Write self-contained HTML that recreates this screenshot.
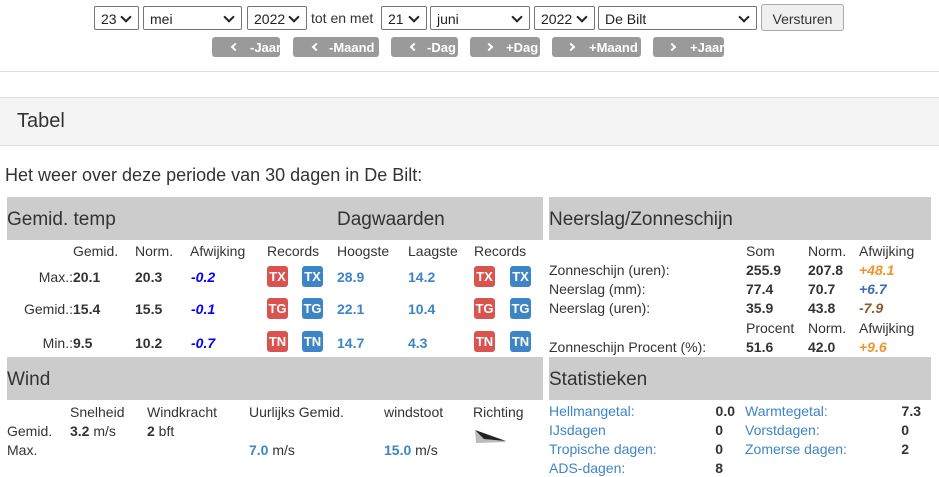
<!DOCTYPE html>
<html><head><meta charset="utf-8"><style>
*{margin:0;padding:0;box-sizing:border-box}
body{width:939px;height:477px;overflow:hidden;background:#fff;font-family:"Liberation Sans",sans-serif;font-size:14px;color:#333;position:relative}
.a{position:absolute;white-space:nowrap;line-height:1}
.sel{position:absolute;top:6px;height:24px;border:1px solid #767676;border-radius:2px;background:#fff;font-size:14px;padding:4px 0 0 6px;color:#222;white-space:nowrap}
.sel::after{content:"";position:absolute;right:8px;top:6px;width:6px;height:6px;border-right:2px solid #222;border-bottom:2px solid #222;transform:rotate(45deg)}
.btn{position:absolute;top:37px;height:20px;background:#9a9a9a;border-radius:3px;color:#fff;font-weight:bold;font-size:13px;white-space:nowrap}
.btn span{position:absolute;top:3px;white-space:nowrap}
.btn i{position:absolute;top:7px;width:6px;height:6px;border-left:2px solid #fff;border-bottom:2px solid #fff}
.hd{position:absolute;background:#ccc;height:43px;font-size:19px;padding:12px 0 0 0;color:#333}
.b{font-weight:bold}
.bd{position:absolute;width:21px;height:21px;border-radius:3px;color:#fff;font-weight:bold;font-size:13px;text-align:center;line-height:21px}
.r{background:#d9534f}.u{background:#3d85c6}
.bl{color:#3d85c6}
.ab{color:#00f;font-weight:bold;font-style:italic}
.or{color:#f0932b;font-weight:bold;font-style:italic}
</style></head><body>
<div class="sel" style="left:94px;width:45px">23</div>
<div class="sel" style="left:143px;width:99px">mei</div>
<div class="sel" style="left:247px;width:60px">2022</div>
<div class="a" style="left:311px;top:11px">tot en met</div>
<div class="sel" style="left:381px;width:46px">21</div>
<div class="sel" style="left:430px;width:100px">juni</div>
<div class="sel" style="left:534px;width:61px">2022</div>
<div class="sel" style="left:598px;width:159px">De Bilt</div>
<div style="position:absolute;left:761px;top:4px;width:83px;height:27px;border:1px solid #aaa;border-radius:3px;background:#efefef;font-size:14px;text-align:center;padding-top:6px">Versturen</div>

<div class="btn" style="left:212px;width:68px"><i style="left:20px;transform:rotate(45deg)"></i><span style="left:38px">-Jaar</span></div>
<div class="btn" style="left:293px;width:86px"><i style="left:20px;transform:rotate(45deg)"></i><span style="left:36px">-Maand</span></div>
<div class="btn" style="left:391px;width:67px"><i style="left:20px;transform:rotate(45deg)"></i><span style="left:36px">-Dag</span></div>
<div class="btn" style="left:470px;width:70px"><i style="left:16px;transform:rotate(-135deg)"></i><span style="left:36px">+Dag</span></div>
<div class="btn" style="left:552px;width:89px"><i style="left:16px;transform:rotate(-135deg)"></i><span style="left:37px">+Maand</span></div>
<div class="btn" style="left:653px;width:71px"><i style="left:16px;transform:rotate(-135deg)"></i><span style="left:37px">+Jaar</span></div>

<div style="position:absolute;left:0;top:71px;width:939px;height:1px;background:#ddd"></div>
<div style="position:absolute;left:0;top:97px;width:939px;height:49px;background:#f4f4f4;border-top:1px solid #ddd;border-bottom:1px solid #ddd"></div>
<div class="a" style="left:17px;top:111px;font-size:20px">Tabel</div>
<div class="a" style="left:5px;top:166px;font-size:18px">Het weer over deze periode van 30 dagen in De Bilt:</div>

<div class="hd" style="left:7px;top:197px;width:536px"><span>Gemid. temp</span><span style="position:absolute;left:330px">Dagwaarden</span></div>
<div class="hd" style="left:549px;top:197px;width:382px">Neerslag/Zonneschijn</div>

<div class="a" style="left:73px;top:244px">Gemid.</div>
<div class="a" style="left:135px;top:244px">Norm.</div>
<div class="a" style="left:190px;top:244px">Afwijking</div>
<div class="a" style="left:267px;top:244px">Records</div>
<div class="a" style="left:337px;top:244px">Hoogste</div>
<div class="a" style="left:408px;top:244px">Laagste</div>
<div class="a" style="left:474px;top:244px">Records</div>

<div class="a" style="right:866px;top:270px">Max.:</div><div class="a b" style="left:73px;top:270px">20.1</div>
<div class="a b" style="left:135px;top:270px">20.3</div><div class="a ab" style="left:191px;top:270px">-0.2</div>
<div class="a" style="right:866px;top:302px">Gemid.:</div><div class="a b" style="left:73px;top:302px">15.4</div>
<div class="a b" style="left:135px;top:302px">15.5</div><div class="a ab" style="left:191px;top:302px">-0.1</div>
<div class="a" style="right:866px;top:336px">Min.:</div><div class="a b" style="left:73px;top:336px">9.5</div>
<div class="a b" style="left:135px;top:336px">10.2</div><div class="a ab" style="left:191px;top:336px">-0.7</div>

<div class="bd r" style="left:267px;top:266px">TX</div><div class="bd u" style="left:302px;top:266px">TX</div>
<div class="bd r" style="left:267px;top:298px">TG</div><div class="bd u" style="left:302px;top:298px">TG</div>
<div class="bd r" style="left:267px;top:331px">TN</div><div class="bd u" style="left:302px;top:331px">TN</div>
<div class="bd r" style="left:474px;top:266px">TX</div><div class="bd u" style="left:510px;top:266px">TX</div>
<div class="bd r" style="left:474px;top:298px">TG</div><div class="bd u" style="left:510px;top:298px">TG</div>
<div class="bd r" style="left:474px;top:331px">TN</div><div class="bd u" style="left:510px;top:331px">TN</div>
<div class="a b bl" style="left:337px;top:270px">28.9</div><div class="a b bl" style="left:408px;top:270px">14.2</div>
<div class="a b bl" style="left:337px;top:302px">22.1</div><div class="a b bl" style="left:408px;top:302px">10.4</div>
<div class="a b bl" style="left:337px;top:336px">14.7</div><div class="a b bl" style="left:408px;top:336px">4.3</div>

<div class="hd" style="left:7px;top:357px;width:536px">Wind</div>
<div class="a" style="left:70px;top:405px">Snelheid</div>
<div class="a" style="left:147px;top:405px">Windkracht</div>
<div class="a" style="left:249px;top:405px">Uurlijks Gemid.</div>
<div class="a" style="left:384px;top:405px">windstoot</div>
<div class="a" style="left:473px;top:405px">Richting</div>
<div class="a" style="left:7px;top:424px">Gemid.</div>
<div class="a" style="left:70px;top:424px"><b>3.2</b> m/s</div>
<div class="a" style="left:147px;top:424px"><b>2</b> bft</div>
<div class="a" style="left:7px;top:443px">Max.</div>
<div class="a" style="left:249px;top:443px"><b class="bl">7.0</b> m/s</div>
<div class="a" style="left:384px;top:443px"><b class="bl">15.0</b> m/s</div>
<svg style="position:absolute;left:470px;top:428px" width="40" height="18"><polygon points="5,3 37,14 6,15" fill="#bbb"/><polygon points="5,2 36,13 14,11" fill="#222"/></svg>

<div class="a" style="left:746px;top:244px">Som</div>
<div class="a" style="left:808px;top:244px">Norm.</div>
<div class="a" style="left:859px;top:244px">Afwijking</div>
<div class="a" style="left:549px;top:263px">Zonneschijn (uren):</div>
<div class="a b" style="left:746px;top:263px">255.9</div><div class="a b" style="left:808px;top:263px">207.8</div><div class="a or" style="left:859px;top:263px">+48.1</div>
<div class="a" style="left:549px;top:282px">Neerslag (mm):</div>
<div class="a b" style="left:746px;top:282px">77.4</div><div class="a b" style="left:808px;top:282px">70.7</div><div class="a b" style="left:859px;top:282px;color:#3a6db0;font-style:italic">+6.7</div>
<div class="a" style="left:549px;top:301px">Neerslag (uren):</div>
<div class="a b" style="left:746px;top:301px">35.9</div><div class="a b" style="left:808px;top:301px">43.8</div><div class="a b" style="left:859px;top:301px;color:#8a5a2b;font-style:italic">-7.9</div>
<div class="a" style="left:746px;top:321px">Procent</div>
<div class="a" style="left:808px;top:321px">Norm.</div>
<div class="a" style="left:859px;top:321px">Afwijking</div>
<div class="a" style="left:549px;top:340px">Zonneschijn Procent (%):</div>
<div class="a b" style="left:746px;top:340px">51.6</div><div class="a b" style="left:808px;top:340px">42.0</div><div class="a or" style="left:859px;top:340px">+9.6</div>

<div class="hd" style="left:549px;top:357px;width:382px">Statistieken</div>
<div class="a bl" style="left:549px;top:404px">Hellmangetal:</div><div class="a b" style="right:204px;top:404px">0.0</div>
<div class="a bl" style="left:549px;top:423px">IJsdagen</div><div class="a b" style="right:216px;top:423px">0</div>
<div class="a bl" style="left:549px;top:442px">Tropische dagen:</div><div class="a b" style="right:216px;top:442px">0</div>
<div class="a bl" style="left:549px;top:461px">ADS-dagen:</div><div class="a b" style="right:216px;top:461px">8</div>
<div class="a bl" style="left:745px;top:404px">Warmtegetal:</div><div class="a b" style="right:18px;top:404px">7.3</div>
<div class="a bl" style="left:745px;top:423px">Vorstdagen:</div><div class="a b" style="right:30px;top:423px">0</div>
<div class="a bl" style="left:745px;top:442px">Zomerse dagen:</div><div class="a b" style="right:30px;top:442px">2</div>
</body></html>
